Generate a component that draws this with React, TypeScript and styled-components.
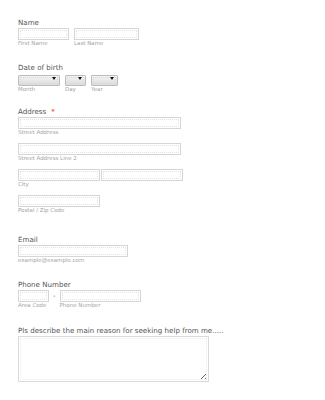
import React from 'react';
import styled, { createGlobalStyle } from 'styled-components';

const GlobalStyle = createGlobalStyle`
  html, body {
    margin: 0;
    padding: 0;
    background: #fff;
  }
  body {
    font-family: 'DejaVu Sans', Verdana, sans-serif;
  }
`;

const Form = styled.form`
  display: flex;
  flex-direction: column;
  padding: 19px 0 0 18px;
`;

const Field = styled.div<{ $after?: number }>`
  display: flex;
  flex-direction: column;
  align-items: flex-start;
  margin-bottom: ${(p) => p.$after ?? 17}px;
`;

const Label = styled.label`
  font-size: 7.1px;
  line-height: 8px;
  color: #555;
  margin-bottom: 1px;
`;

const Required = styled.span`
  color: #e33;
  margin-left: 5px;
`;

const Row = styled.div<{ $gap?: number }>`
  display: flex;
  align-items: flex-start;
  gap: ${(p) => p.$gap ?? 5}px;
`;

const Stack = styled.div<{ $after?: number }>`
  display: flex;
  flex-direction: column;
  margin-bottom: ${(p) => p.$after ?? 0}px;
`;

const Input = styled.input<{ $w: number }>`
  box-sizing: border-box;
  width: ${(p) => p.$w}px;
  height: 12px;
  margin: 0;
  padding: 0;
  border: 1px solid #d6d6d6;
  outline: 1px dotted #e4e4e4;
  outline-offset: -3px;
  background: #fff;
`;

const Sub = styled.span`
  font-size: 5.5px;
  line-height: 7px;
  color: #a4a4a4;
  white-space: nowrap;
`;

const SelectWrap = styled.div<{ $w: number }>`
  position: relative;
  width: ${(p) => p.$w}px;
  height: 11px;
  &::after {
    content: '';
    position: absolute;
    right: 4px;
    top: 4px;
    border-left: 2px solid transparent;
    border-right: 2px solid transparent;
    border-top: 3px solid #111;
  }
`;

const Select = styled.select`
  appearance: none;
  box-sizing: border-box;
  width: 100%;
  height: 100%;
  margin: 0;
  padding: 0;
  border: 1px solid #bdbdbd;
  border-radius: 1px;
  outline: 1px dotted #d8d8d8;
  outline-offset: -3px;
  background: linear-gradient(#f4f4f4, #dcdcdc);
`;

const SelectCol = styled.div`
  display: flex;
  flex-direction: column;
  gap: 2px;
`;

const Dash = styled.span`
  font-size: 7px;
  line-height: 12px;
  color: #777;
`;

const TextArea = styled.textarea`
  box-sizing: border-box;
  width: 191px;
  height: 46px;
  margin: 0;
  padding: 0;
  border: 1px solid #dadada;
  outline: 1px dotted #ececec;
  outline-offset: -3px;
  background: #fff;
  font-family: inherit;
`;

export default function App() {
  return (
    <>
      <GlobalStyle />
      <Form>
        <Field>
          <Label>Name</Label>
          <Row>
            <Stack>
              <Input $w={51} />
              <Sub>First Name</Sub>
            </Stack>
            <Stack>
              <Input $w={65} />
              <Sub>Last Name</Sub>
            </Stack>
          </Row>
        </Field>

        <Field $after={15}>
          <Label>Date of birth</Label>
          <Row>
            <SelectCol>
              <SelectWrap $w={42}>
                <Select />
              </SelectWrap>
              <Sub>Month</Sub>
            </SelectCol>
            <SelectCol>
              <SelectWrap $w={21}>
                <Select />
              </SelectWrap>
              <Sub>Day</Sub>
            </SelectCol>
            <SelectCol>
              <SelectWrap $w={27}>
                <Select />
              </SelectWrap>
              <Sub>Year</Sub>
            </SelectCol>
          </Row>
        </Field>

        <Field $after={22}>
          <Label>
            Address<Required>*</Required>
          </Label>
          <Stack $after={7}>
            <Input $w={163} />
            <Sub>Street Address</Sub>
          </Stack>
          <Stack $after={7}>
            <Input $w={163} />
            <Sub>Street Address Line 2</Sub>
          </Stack>
          <Stack $after={7}>
            <Row $gap={1}>
              <Input $w={82} />
              <Input $w={82} />
            </Row>
            <Sub>City</Sub>
          </Stack>
          <Stack>
            <Input $w={82} />
            <Sub>Postal / Zip Code</Sub>
          </Stack>
        </Field>

        <Field>
          <Label>Email</Label>
          <Input $w={110} />
          <Sub>example@example.com</Sub>
        </Field>

        <Field $after={18}>
          <Label>Phone Number</Label>
          <Row $gap={4}>
            <Stack>
              <Input $w={31} />
              <Sub>Area Code</Sub>
            </Stack>
            <Dash>-</Dash>
            <Stack>
              <Input $w={81} />
              <Sub>Phone Number</Sub>
            </Stack>
          </Row>
        </Field>

        <Field>
          <Label>Pls describe the main reason for seeking help from me.....</Label>
          <TextArea />
        </Field>
      </Form>
    </>
  );
}
